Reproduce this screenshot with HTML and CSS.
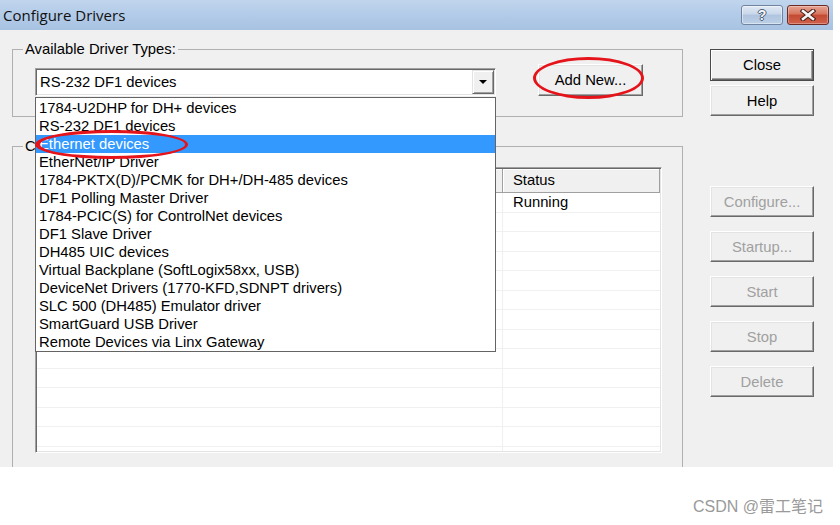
FILE: index.html
```html
<!DOCTYPE html>
<html>
<head>
<meta charset="utf-8">
<title>Configure Drivers</title>
<link rel="stylesheet" href="styles.css">
</head>
<body>
<div class="dialog">
  <div class="titlebar">
    <div class="title">Configure Drivers</div>
    <div class="caption-buttons">
      <div class="cbtn help-btn"><span class="qmark">?</span></div>
      <div class="cbtn close-btn">
        <svg width="16" height="12" viewBox="0 0 16 12">
          <path d="M3 2 L13 10 M13 2 L3 10" stroke="#4a1c16" stroke-width="4.6" stroke-linecap="square" fill="none"/>
          <path d="M3 2 L13 10 M13 2 L3 10" stroke="#f4f4f4" stroke-width="2.6" stroke-linecap="square" fill="none"/>
        </svg>
      </div>
    </div>
  </div>
  <div class="client">
    <div class="left-col">
      <fieldset class="group group-available">
        <legend>Available Driver Types:</legend>
        <div class="group-row">
          <div class="combo">
            <div class="combo-field">
              <span class="combo-text">RS-232 DF1 devices</span>
              <span class="combo-arrow"><span class="tri"></span></span>
            </div>
            <ul class="dropdown">
              <li>1784-U2DHP for DH+ devices</li>
              <li>RS-232 DF1 devices</li>
              <li class="selected">Ethernet devices</li>
              <li>EtherNet/IP Driver</li>
              <li>1784-PKTX(D)/PCMK for DH+/DH-485 devices</li>
              <li>DF1 Polling Master Driver</li>
              <li>1784-PCIC(S) for ControlNet devices</li>
              <li>DF1 Slave Driver</li>
              <li>DH485 UIC devices</li>
              <li>Virtual Backplane (SoftLogix58xx, USB)</li>
              <li>DeviceNet Drivers (1770-KFD,SDNPT drivers)</li>
              <li>SLC 500 (DH485) Emulator driver</li>
              <li>SmartGuard USB Driver</li>
              <li>Remote Devices via Linx Gateway</li>
            </ul>
          </div>
          <button class="btn btn-add">Add New...</button>
        </div>
      </fieldset>
      <fieldset class="group group-configured">
        <legend>Configured Drivers:</legend>
        <div class="listview">
          <div class="lv-header">
            <div class="lv-hcell"></div>
            <div class="lv-hcell">Status</div>
          </div>
          <div class="lv-body">
            <div class="lv-row"><div class="lv-cell"></div><div class="lv-cell">Running</div></div>
            <div class="lv-row"><div class="lv-cell"></div><div class="lv-cell"></div></div>
            <div class="lv-row"><div class="lv-cell"></div><div class="lv-cell"></div></div>
            <div class="lv-row"><div class="lv-cell"></div><div class="lv-cell"></div></div>
            <div class="lv-row"><div class="lv-cell"></div><div class="lv-cell"></div></div>
            <div class="lv-row"><div class="lv-cell"></div><div class="lv-cell"></div></div>
            <div class="lv-row"><div class="lv-cell"></div><div class="lv-cell"></div></div>
            <div class="lv-row"><div class="lv-cell"></div><div class="lv-cell"></div></div>
            <div class="lv-row"><div class="lv-cell"></div><div class="lv-cell"></div></div>
            <div class="lv-row"><div class="lv-cell"></div><div class="lv-cell"></div></div>
            <div class="lv-row"><div class="lv-cell"></div><div class="lv-cell"></div></div>
            <div class="lv-row"><div class="lv-cell"></div><div class="lv-cell"></div></div>
            <div class="lv-row"><div class="lv-cell"></div><div class="lv-cell"></div></div>
            <div class="lv-row"><div class="lv-cell"></div><div class="lv-cell"></div></div>
          </div>
        </div>
      </fieldset>
    </div>
    <div class="right-col">
      <button class="btn btn-default">Close</button>
      <button class="btn btn-help">Help</button>
      <button class="btn btn-disabled btn-first-disabled">Configure...</button>
      <button class="btn btn-disabled">Startup...</button>
      <button class="btn btn-disabled">Start</button>
      <button class="btn btn-disabled">Stop</button>
      <button class="btn btn-disabled">Delete</button>
    </div>
  </div>
  <div class="mark mark-ethernet"></div>
  <div class="mark mark-add"></div>
</div>
<div class="footer">CSDN @雷工笔记</div>
</body>
</html>
```

FILE: styles.css
```css
* { box-sizing: border-box; }
html, body { margin: 0; padding: 0; background: #fff; }
body {
  width: 840px;
  height: 525px;
  overflow: hidden;
  font-family: "Liberation Sans", Arial, sans-serif;
  font-size: 14.8px;
  color: #000;
}
.dialog {
  position: relative;
  width: 833px;
  height: 467px;
  background: #f0f0f0;
  overflow: hidden;
  display: flex;
  flex-direction: column;
}
.titlebar {
  height: 30px;
  flex: none;
  display: flex;
  justify-content: space-between;
  background: linear-gradient(#c1d5ed, #b2cbe8 50%, #a8c2e2);
}
.title {
  font-family: "Open Sans", "Noto Sans", sans-serif;
  font-size: 15px;
  line-height: 30px;
  padding-left: 3px;
  color: #111;
}
.caption-buttons { display: flex; gap: 4px; padding: 5px 4px 0 0; }
.cbtn {
  width: 42px;
  height: 20px;
  border-radius: 3px;
  display: flex;
  align-items: center;
  justify-content: center;
}
.help-btn {
  border: 1px solid #71849f;
  background: linear-gradient(#e0e9f4, #c9d7ea 45%, #afc4df 50%, #bccfe7);
  box-shadow: inset 0 0 0 1px rgba(255,255,255,0.45);
}
.qmark {
  font-family: "Liberation Sans", Arial, sans-serif;
  font-weight: bold;
  font-size: 14px;
  line-height: 14px;
  color: #f6f6f6;
  text-shadow: 1px 0 #4b5d78, -1px 0 #4b5d78, 0 1px #4b5d78, 0 -1px #4b5d78;
}
.close-btn {
  border: 1px solid #6d2a22;
  background: linear-gradient(#e6a392, #d6765f 45%, #c44a33 50%, #d0614b);
  box-shadow: inset 0 0 0 1px rgba(255,255,255,0.3);
}
.client {
  flex: 1;
  min-height: 0;
  display: flex;
  padding: 11px 0 0 12px;
}
.left-col { width: 671px; flex: none; display: flex; flex-direction: column; }
.right-col {
  margin-left: 27px;
  width: 105px;
  flex: none;
  display: flex;
  flex-direction: column;
  padding-top: 8px;
}
.group {
  margin: 0;
  min-width: 0;
  border: 1px solid #b0b0b0;
  padding: 0 0 0 22px;
}
.group legend {
  padding: 0 2px;
  margin-left: -12px;
  line-height: 16px;
}
.group-available { padding-top: 7px; padding-bottom: 20px; }
.group-configured { margin-top: 21px; padding-top: 13px; flex: none; height: 360px; }
.group-row { display: flex; align-items: flex-end; }
.combo { position: relative; width: 461px; flex: none; }
.combo-field {
  height: 28px;
  display: flex;
  background: #fff;
  border: 1px solid;
  border-color: #a0a0a0 #fff #fff #a0a0a0;
  box-shadow: inset 1px 1px #696969, inset -1px -1px #e3e3e3;
  padding: 1px;
}
.combo-text { flex: 1; padding-left: 3px; line-height: 25px; }
.combo-arrow {
  width: 22px;
  height: 24px;
  background: #f0f0f0;
  border: 1px solid;
  border-color: #e3e3e3 #696969 #696969 #e3e3e3;
  box-shadow: inset 1px 1px #fff, inset -1px -1px #a0a0a0;
  display: flex;
  align-items: center;
  justify-content: center;
}
.tri {
  width: 0;
  height: 0;
  border-left: 4px solid transparent;
  border-right: 4px solid transparent;
  border-top: 4px solid #000;
}
.dropdown {
  position: absolute;
  left: 0;
  top: calc(100% + 1px);
  width: 461px;
  margin: 0;
  padding: 1px 0 0;
  list-style: none;
  background: #fff;
  border: 1px solid #646464;
  z-index: 5;
}
.dropdown li {
  height: 18px;
  line-height: 18px;
  padding-left: 3px;
  white-space: nowrap;
}
.dropdown li.selected { background: #3399ff; color: #fff; }
.btn {
  font: inherit;
  color: #000;
  height: 31px;
  width: 104px;
  padding: 0;
  background: #f0f0f0;
  border: 1px solid;
  border-color: #fff #696969 #696969 #fff;
  box-shadow: inset -1px -1px #a0a0a0, inset 1px 1px #e3e3e3;
}
.btn-add { margin-left: 42px; width: 105px; height: 32px; }
.btn-default {
  height: 32px;
  border-color: #4a4a4a;
  box-shadow: inset 1px 1px #fff, inset -1px -1px #696969, inset -2px -2px #a0a0a0;
}
.btn-help { margin-top: 4px; }
.btn-disabled { color: #a0a0a0; margin-top: 14px; }
.btn-first-disabled { margin-top: 70px; }
.listview {
  width: 627px;
  height: 286px;
  background: #fff;
  border: 1px solid;
  border-color: #a0a0a0 #fff #fff #a0a0a0;
  box-shadow: inset 1px 1px #696969, inset -1px -1px #e3e3e3;
  padding: 1px;
  display: flex;
  flex-direction: column;
  overflow: hidden;
}
.lv-header { display: grid; grid-template-columns: 466px 157px; height: 24px; flex: none; }
.lv-hcell {
  background: #f0f0f0;
  border-right: 1px solid #a0a0a0;
  border-bottom: 1px solid #a0a0a0;
  box-shadow: inset 1px 1px #fff;
  padding-left: 10px;
  line-height: 22px;
  white-space: nowrap;
  overflow: hidden;
}
.lv-body { flex: 1; overflow: hidden; }
.lv-row {
  display: grid;
  grid-template-columns: 466px 157px;
  height: 19.5px;
  border-bottom: 1px solid #f0f0f0;
}
.lv-cell { padding-left: 10px; line-height: 19px; white-space: nowrap; }
.lv-cell:first-child { border-right: 1px solid #f0f0f0; }
.mark {
  position: absolute;
  border: 3.5px solid #e5141b;
  border-radius: 50%;
  z-index: 10;
}
.mark-ethernet { left: 35px; top: 130px; width: 153px; height: 29px; border-left-width: 5px; }
.mark-add { left: 533px; top: 57px; width: 111px; height: 42px; }
.footer {
  height: 58px;
  display: flex;
  justify-content: flex-end;
  padding: 30px 17px 0 0;
  font-family: "Liberation Sans", "Noto Sans CJK SC", sans-serif;
  font-size: 16px;
  line-height: 20px;
  color: #9a9a9a;
}
```
